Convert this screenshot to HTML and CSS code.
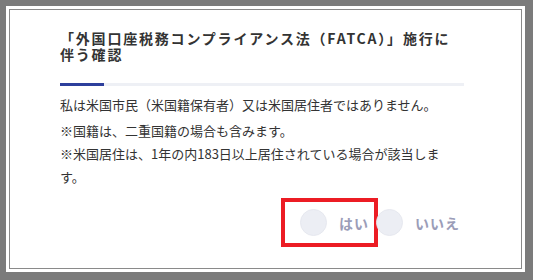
FILE: index.html
```html
<!DOCTYPE html>
<html lang="ja">
<head>
  <meta charset="utf-8">
  <title>FATCA確認</title>
  <link rel="stylesheet" href="styles.css">
</head>
<body>
  <div class="frame">
    <div class="panel">
      <div class="content">
        <h1 class="title">「外国口座税務コンプライアンス法（FATCA）」施行に伴う確認</h1>

        <div class="progress">
          <div class="progress-fill"></div>
        </div>

        <p class="lead">私は米国市民（米国籍保有者）又は米国居住者ではありません。</p>
        <p class="note">※国籍は、二重国籍の場合も含みます。</p>
        <p class="note">※米国居住は、1年の内183日以上居住されている場合が該当します。</p>

        <div class="answers">
          <label class="choice choice-yes">
            <span class="radio"></span>
            <span class="choice-label">はい</span>
          </label>
          <label class="choice">
            <span class="radio"></span>
            <span class="choice-label">いいえ</span>
          </label>
        </div>
      </div>
    </div>
  </div>
</body>
</html>
```

FILE: styles.css
```css
html, body {
  margin: 0;
  padding: 0;
}

body {
  background-color: #7b7b7b;
  font-family: "Noto Sans CJK JP", "Noto Sans", sans-serif;
  color: #333;
  width: 533px;
  height: 280px;
  padding: 6px 8px 8px 6px;
  box-sizing: border-box;
  overflow: hidden;
}

.frame {
  background-color: white;
  padding: 3px;
  height: 100%;
  box-sizing: border-box;
}

.panel {
  border: 1px solid #8a8a8a;
  height: 100%;
  box-sizing: border-box;
  background-color: white;
}

.content {
  width: 404px;
  margin-left: 50px;
  padding-top: 20px;
}

.title {
  font-size: 14px;
  font-weight: bold;
  line-height: 16px;
  letter-spacing: 1.8px;
  margin: 0;
  color: #333;
}

.progress {
  margin-top: 21px;
  height: 3px;
  background-color: #eef0f5;
}

.progress-fill {
  width: 44px;
  height: 3px;
  background-color: #2d3f9c;
}

.lead {
  font-size: 13px;
  line-height: 20px;
  margin: 9px 0 4px;
}

.note {
  font-size: 13px;
  line-height: 23px;
  margin: 0;
}

.answers {
  display: flex;
  justify-content: flex-end;
  margin-top: 10px;
  padding-right: 4px;
}

.choice {
  display: flex;
  align-items: center;
  gap: 12px;
  font-size: 14px;
  font-weight: bold;
  color: #9b9db8;
  letter-spacing: 1px;
}

.choice-yes {
  border: 4px solid #ec1c24;
  padding: 7px 5px 7px 15px;
  margin-right: -2px;
}

.radio {
  width: 27px;
  height: 27px;
  border-radius: 50%;
  background-color: #eceef4;
  border: 1px solid #e6e8ef;
  box-sizing: border-box;
}
```
